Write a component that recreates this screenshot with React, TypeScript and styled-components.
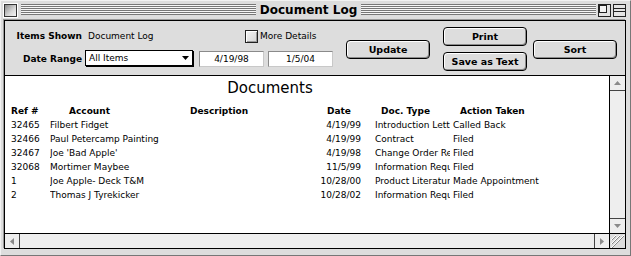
import styled, { createGlobalStyle } from "styled-components";

const GlobalStyle = createGlobalStyle`
  html, body {
    margin: 0;
    padding: 0;
    background: #dddddd;
  }
  body {
    font-family: "DejaVu Sans", "Liberation Sans", sans-serif;
    font-size: 9px;
    color: #000;
  }
`;

const Window = styled.div`
  width: 631px;
  height: 256px;
  box-sizing: border-box;
  background: #dddddd;
  border-top: 1px solid #f2f2f2;
  border-left: 1px solid #f2f2f2;
  border-right: 1px solid #777;
  border-bottom: 1px solid #777;
  display: flex;
  flex-direction: column;
`;

const TitleBar = styled.div`
  height: 19px;
  flex: none;
  display: flex;
  align-items: flex-start;
  padding: 0 4px 0 3px;
`;

const CloseBox = styled.div`
  width: 13px;
  height: 13px;
  box-sizing: border-box;
  margin-top: 3px;
  border: 1px solid #333;
  background: linear-gradient(135deg, #8a8a8a 0%, #d8d8d8 60%, #f4f4f4 100%);
  box-shadow: 0 0 0 1px #fff;
`;

const Stripes = styled.div<{ $before?: number; $after?: number }>`
  flex: 1;
  height: 11px;
  margin-top: 3px;
  margin-left: ${(p) => p.$before ?? 0}px;
  margin-right: ${(p) => p.$after ?? 0}px;
  background: repeating-linear-gradient(
    to bottom,
    #777 0px,
    #777 1px,
    #f6f6f6 1px,
    #f6f6f6 2px
  );
`;

const WindowTitle = styled.div`
  font-family: "DejaVu Sans", sans-serif;
  font-weight: bold;
  font-size: 12px;
  line-height: 19px;
  padding: 0 4px;
  white-space: nowrap;
`;

const TitleButton = styled.svg<{ $gap?: number }>`
  flex: none;
  margin-top: 3px;
  margin-left: ${(p) => p.$gap ?? 0}px;
  display: block;
`;

const Frame = styled.div`
  flex: 1;
  margin: 0 4px 6px 3px;
  border: 1px solid #000;
  box-shadow: -1px -1px 0 #999;
  display: flex;
  flex-direction: column;
  min-height: 0;
`;

const Toolbar = styled.div`
  height: 54px;
  flex: none;
  border-bottom: 1px solid #000;
  background: #dddddd;
  display: flex;
  align-items: flex-start;
`;

const Fields = styled.div`
  display: grid;
  grid-template-columns: 77px 248px;
  grid-template-rows: 14px 17px;
  column-gap: 3px;
  row-gap: 7px;
  padding-top: 8px;
  align-items: center;
`;

const Label = styled.div`
  font-weight: bold;
  text-align: right;
  white-space: nowrap;
`;

const ValueRow = styled.div`
  display: flex;
  align-items: center;
  height: 100%;
`;

const ValueText = styled.div`
  width: 157px;
  padding-left: 3px;
  white-space: nowrap;
`;

const CheckBox = styled.div`
  width: 13px;
  height: 13px;
  box-sizing: border-box;
  border: 1px solid #222;
  background: linear-gradient(135deg, #f4f4f4 0%, #d6d6d6 100%);
  box-shadow: inset 1px 1px 0 #fff, inset -1px -1px 0 #999;
`;

const CheckLabel = styled.span`
  margin-left: 2px;
  white-space: nowrap;
`;

const PickRow = styled.div`
  display: flex;
  align-items: flex-start;
  height: 100%;
`;

const Popup = styled.div`
  width: 108px;
  height: 16px;
  box-sizing: border-box;
  border: 1px solid #000;
  background: #fff;
  box-shadow: 1px 1px 0 #000;
  display: flex;
  align-items: center;
  justify-content: space-between;
  padding: 0 3px 0 3px;
`;

const DateField = styled.div<{ $gap: number }>`
  width: 65px;
  height: 16px;
  box-sizing: border-box;
  margin-top: 1px;
  margin-left: ${(p) => p.$gap}px;
  border: 1px solid #8a8a8a;
  border-right-color: #c8c8c8;
  border-bottom-color: #c8c8c8;
  background: #fff;
  display: flex;
  align-items: center;
  justify-content: center;
`;

const ButtonColumn = styled.div<{ $top: number; $left: number }>`
  display: flex;
  flex-direction: column;
  gap: 6px;
  padding-top: ${(p) => p.$top}px;
  margin-left: ${(p) => p.$left}px;
`;

const Button = styled.button`
  appearance: none;
  width: 84px;
  height: 19px;
  box-sizing: border-box;
  padding: 0;
  border: 1px solid #000;
  border-radius: 4px;
  background: #dddddd;
  box-shadow: inset 1px 1px 0 #fff, inset -1px -1px 0 #8c8c8c;
  font-family: "DejaVu Sans", sans-serif;
  font-weight: bold;
  font-size: 9.5px;
  color: #000;
`;

const ListArea = styled.div`
  flex: 1;
  display: flex;
  min-height: 0;
`;

const List = styled.div`
  flex: 1;
  background: #fff;
  overflow: hidden;
`;

const ListTitle = styled.div`
  width: 530px;
  margin-top: 3px;
  margin-bottom: 7px;
  text-align: center;
  font-size: 15px;
  line-height: 18px;
`;

const Table = styled.div`
  display: grid;
  grid-template-columns: 39px 140px 123px 62px 75px 1fr;
  grid-auto-rows: 14px;
  padding-left: 6px;
  align-items: center;
`;

const Head = styled.div<{ $indent?: number }>`
  font-weight: bold;
  padding-left: ${(p) => p.$indent ?? 0}px;
  white-space: nowrap;
`;

const Cell = styled.div<{ $right?: boolean; $indent?: number }>`
  white-space: nowrap;
  overflow: hidden;
  text-align: ${(p) => (p.$right ? "right" : "left")};
  padding-right: ${(p) => (p.$right ? 14 : 0)}px;
  padding-left: ${(p) => p.$indent ?? 0}px;
`;

const VScroll = styled.div`
  width: 15px;
  flex: none;
  border-left: 1px solid #000;
  background: #eeeeee;
  display: flex;
  flex-direction: column;
  justify-content: space-between;
`;

const ArrowBox = styled.div<{ $edge: "top" | "bottom" | "left" | "right" }>`
  flex: none;
  width: ${(p) => (p.$edge === "top" || p.$edge === "bottom" ? "15px" : "14px")};
  height: 14px;
  background: #eeeeee;
  display: flex;
  align-items: center;
  justify-content: center;
  ${(p) => `border-${p.$edge}: 1px solid #444;`}
`;

const HScroll = styled.div`
  height: 14px;
  flex: none;
  border-top: 1px solid #000;
  display: flex;
`;

const HBar = styled.div`
  flex: 1;
  border-right: 1px solid #000;
  background: #eeeeee;
  display: flex;
  justify-content: space-between;
`;

const GrowBox = styled.div`
  width: 15px;
  flex: none;
  background: #dddddd;
  display: flex;
  align-items: center;
  justify-content: center;
`;

const Arrow = ({ dir, color = "#8a8a8a" }: { dir: "up" | "down" | "left" | "right"; color?: string }) => {
  const flat = dir === "up" || dir === "down";
  const w = flat ? 7 : 4;
  const h = flat ? 4 : 7;
  const pts = {
    up: "0,4 7,4 3.5,0",
    down: "0,0 7,0 3.5,4",
    left: "4,0 4,7 0,3.5",
    right: "0,0 0,7 4,3.5",
  }[dir];
  return (
    <svg width={w} height={h} viewBox={`0 0 ${w} ${h}`}>
      <polygon points={pts} fill={color} />
    </svg>
  );
};

const ZoomIcon = () => (
  <TitleButton width="13" height="13" viewBox="0 0 13 13" $gap={2}>
    <rect x="0.5" y="0.5" width="12" height="12" fill="#e4e4e4" stroke="#222" />
    <rect x="1.5" y="1.5" width="7" height="7" fill="#f4f4f4" stroke="#222" />
  </TitleButton>
);

const ShadeIcon = () => (
  <TitleButton width="13" height="13" viewBox="0 0 13 13" $gap={2}>
    <rect x="0.5" y="0.5" width="12" height="12" fill="#e4e4e4" stroke="#222" />
    <line x1="1" y1="4.5" x2="12" y2="4.5" stroke="#222" />
    <line x1="1" y1="7.5" x2="12" y2="7.5" stroke="#222" />
  </TitleButton>
);

const GrowIcon = () => (
  <svg width="13" height="13" viewBox="0 0 13 13">
    {[4, 8, 12].map((d) => (
      <g key={d}>
        <line x1={0} y1={d + 1} x2={d + 1} y2={0} stroke="#fff" />
        <line x1={1} y1={d + 1} x2={d + 1} y2={1} stroke="#888" />
      </g>
    ))}
  </svg>
);

const rows = [
  ["32465", "Filbert Fidget", "", "4/19/99", "Introduction Letter", "Called Back"],
  ["32466", "Paul Petercamp Painting", "", "4/19/99", "Contract", "Filed"],
  ["32467", "Joe 'Bad Apple'", "", "4/19/98", "Change Order Request", "Filed"],
  ["32068", "Mortimer Maybee", "", "11/5/99", "Information Request", "Filed"],
  ["1", "Joe Apple- Deck T&M", "", "10/28/00", "Product Literature", "Made Appointment"],
  ["2", "Thomas J Tyrekicker", "", "10/28/02", "Information Request", "Filed"],
];

export default function App() {
  return (
    <>
      <GlobalStyle />
      <Window>
        <TitleBar>
          <CloseBox />
          <Stripes $before={4} />
          <WindowTitle>Document Log</WindowTitle>
          <Stripes $after={0} />
          <ZoomIcon />
          <ShadeIcon />
        </TitleBar>
        <Frame>
          <Toolbar>
            <Fields>
              <Label>Items Shown</Label>
              <ValueRow>
                <ValueText>Document Log</ValueText>
                <CheckBox />
                <CheckLabel>More Details</CheckLabel>
              </ValueRow>
              <Label>Date Range</Label>
              <PickRow>
                <Popup>
                  <span>All Items</span>
                  <Arrow dir="down" color="#000" />
                </Popup>
                <DateField $gap={6}>4/19/98</DateField>
                <DateField $gap={4}>1/5/04</DateField>
              </PickRow>
            </Fields>
            <ButtonColumn $top={19} $left={13}>
              <Button>Update</Button>
            </ButtonColumn>
            <ButtonColumn $top={6} $left={13}>
              <Button>Print</Button>
              <Button>Save as Text</Button>
            </ButtonColumn>
            <ButtonColumn $top={19} $left={6}>
              <Button>Sort</Button>
            </ButtonColumn>
          </Toolbar>
          <ListArea>
            <List>
              <ListTitle>Documents</ListTitle>
              <Table>
                <Head>Ref #</Head>
                <Head $indent={19}>Account</Head>
                <Head>Description</Head>
                <Head $indent={14}>Date</Head>
                <Head $indent={6}>Doc. Type</Head>
                <Head $indent={10}>Action Taken</Head>
                {rows.map((r) =>
                  r.map((v, i) => (
                    <Cell key={r[0] + i} $right={i === 3} $indent={i === 5 ? 3 : 0}>
                      {v}
                    </Cell>
                  ))
                )}
              </Table>
            </List>
            <VScroll>
              <ArrowBox $edge="bottom">
                <Arrow dir="up" />
              </ArrowBox>
              <ArrowBox $edge="top">
                <Arrow dir="down" />
              </ArrowBox>
            </VScroll>
          </ListArea>
          <HScroll>
            <HBar>
              <ArrowBox $edge="right">
                <Arrow dir="left" />
              </ArrowBox>
              <ArrowBox $edge="left">
                <Arrow dir="right" />
              </ArrowBox>
            </HBar>
            <GrowBox>
              <GrowIcon />
            </GrowBox>
          </HScroll>
        </Frame>
      </Window>
    </>
  );
}
